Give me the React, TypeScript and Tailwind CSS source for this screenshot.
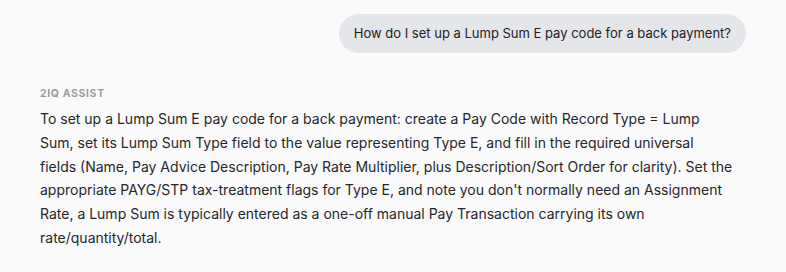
import React from "react";

export default function App() {
  return (
    <div
      className="min-h-[272px] w-full bg-[#fafafa] px-10 pt-[14px]"
      style={{ fontFamily: "Inter, 'Noto Sans', sans-serif" }}
    >
      <div className="flex justify-end">
        <div className="rounded-[20px] bg-[#e5e6ea] px-[15px] py-[10px] text-[13px] leading-[19px] text-[#1f2024]">
          How do I set up a Lump Sum E pay code for a back payment?
        </div>
      </div>
      <div className="mt-[34px] max-w-[698px]">
        <div className="text-[10.5px] font-bold uppercase leading-[14px] tracking-[0.06em] text-[#9a9ca4]">
          2IQ ASSIST
        </div>
        <p className="mt-[6px] text-[14px] leading-[23.8px] text-[#26272b]">
          To set up a Lump Sum E pay code for a back payment: create a Pay Code with Record Type = Lump
          <br />
          Sum, set its Lump Sum Type field to the value representing Type E, and fill in the required universal
          <br />
          fields (Name, Pay Advice Description, Pay Rate Multiplier, plus Description/Sort Order for clarity). Set the
          appropriate PAYG/STP tax-treatment flags for Type E, and note you don't normally need an Assignment Rate, a Lump
          Sum is typically entered as a one-off manual Pay Transaction carrying its own rate/quantity/total.
        </p>
      </div>
    </div>
  );
}
